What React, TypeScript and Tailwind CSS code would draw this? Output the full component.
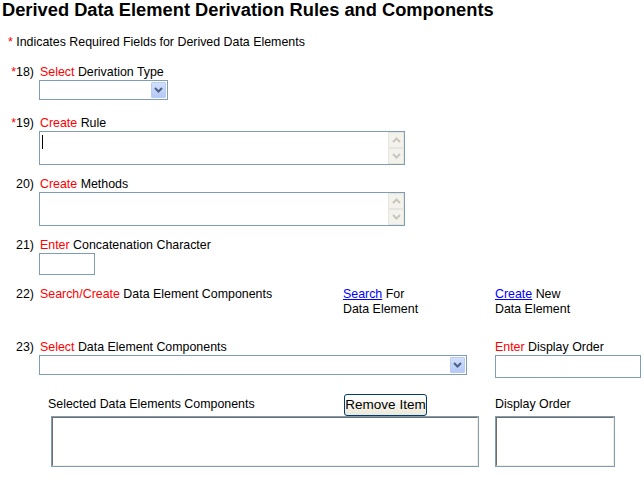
const RED = "text-[#ff0000]";

function Chevron({ up, color }: { up?: boolean; color: string }) {
  return (
    <svg width="9" height="6" viewBox="0 0 9 6" className={up ? "rotate-180" : ""}>
      <path d="M1 1 L4.5 4.5 L8 1" fill="none" stroke={color} strokeWidth="2" />
    </svg>
  );
}

function SelectBox({ width }: { width: string }) {
  return (
    <div className={`relative h-[20px] ${width} border border-[#7f9db9] bg-white`}>
      <div className="absolute right-px top-px flex h-[16px] w-[15px] items-center justify-center rounded-[1px] border border-[#b9cbf3] bg-gradient-to-b from-[#d2dffc] to-[#b5c9f7]">
        <Chevron color="#4d6185" />
      </div>
    </div>
  );
}

function TextArea({ cursor }: { cursor?: boolean }) {
  return (
    <div className="relative h-[34px] w-[366px] border border-[#7f9db9] bg-white">
      {cursor && <div className="absolute left-[2px] top-[3px] h-[14px] w-px bg-black" />}
      <div className="absolute right-0 top-0 flex flex-col">
        <div className="flex h-[16px] w-[16px] items-center justify-center border border-[#e8e6dc] bg-[#f3f2ec]">
          <Chevron up color="#c9c7bb" />
        </div>
        <div className="flex h-[16px] w-[16px] items-center justify-center border border-[#e8e6dc] bg-[#f3f2ec]">
          <Chevron color="#c9c7bb" />
        </div>
      </div>
    </div>
  );
}

function Label({ num, req, verb, rest }: { num: string; req?: boolean; verb: string; rest: string }) {
  return (
    <div className="flex pt-px leading-[15px]">
      <div className="w-[34px] text-right">
        {req && <span className={RED}>*</span>}
        {num}
      </div>
      <div className="ml-[6px]">
        <span className={RED}>{verb}</span> {rest}
      </div>
    </div>
  );
}

function ListBox({ width }: { width: string }) {
  return (
    <div className={`h-[51px] ${width} border border-[#7f9db9] bg-white`}>
      <div className="h-full w-full border border-t-[#716f64] border-l-[#716f64] border-r-[#f1efe2] border-b-[#f1efe2]" />
    </div>
  );
}

export default function App() {
  return (
    <div className="h-[484px] w-[644px] overflow-hidden bg-white font-['Liberation_Sans',Arial,sans-serif] text-[12.4px] text-black">
      <h1 className="pl-[2px] text-[18.3px] font-bold leading-[19px]">
        Derived Data Element Derivation Rules and Components
      </h1>

      <div className="mt-[16px] pl-[8px] leading-[15px]">
        <span className={RED}>*</span> Indicates Required Fields for Derived Data Elements
      </div>

      <div className="mt-[14px]">
        <Label num="18)" req verb="Select" rest="Derivation Type" />
        <div className="ml-[39px]">
          <SelectBox width="w-[129px]" />
        </div>
      </div>

      <div className="mt-[15px]">
        <Label num="19)" req verb="Create" rest="Rule" />
        <div className="ml-[39px]">
          <TextArea cursor />
        </div>
      </div>

      <div className="mt-[11px]">
        <Label num="20)" verb="Create" rest="Methods" />
        <div className="ml-[39px]">
          <TextArea />
        </div>
      </div>

      <div className="mt-[11px]">
        <Label num="21)" verb="Enter" rest="Concatenation Character" />
        <div className="ml-[39px] h-[22px] w-[56px] border border-[#7f9db9] bg-white" />
      </div>

      <div className="mt-[11px] flex leading-[15px]">
        <div className="w-[343px]">
          <Label num="22)" verb="Search/Create" rest="Data Element Components" />
        </div>
        <div className="w-[152px] pt-px">
          <a href="#" className="text-[#0000ff] underline">Search</a> For
          <br />
          Data Element
        </div>
        <div className="pt-px">
          <a href="#" className="text-[#0000ff] underline">Create</a> New
          <br />
          Data Element
        </div>
      </div>

      <div className="mt-[22px] flex">
        <div className="w-[495px]">
          <Label num="23)" verb="Select" rest="Data Element Components" />
          <div className="ml-[39px]">
            <SelectBox width="w-[428px]" />
          </div>
        </div>
        <div>
          <div className="pt-px leading-[15px]">
            <span className={RED}>Enter</span> Display Order
          </div>
          <div className="h-[23px] w-[146px] border border-[#7f9db9] bg-white" />
        </div>
      </div>

      <div className="mt-[15px] flex">
        <div className="w-[495px]">
          <div className="flex h-[23px] items-center pl-[48px]">
            <div className="w-[296px]">Selected Data Elements Components</div>
            <button className="h-[22px] w-[83px] whitespace-nowrap rounded-[3px] border border-[#003c74] bg-gradient-to-b from-white to-[#ece9d8] px-0 text-[13.5px] leading-[18px]">
              Remove Item
            </button>
          </div>
          <div className="ml-[51px]">
            <ListBox width="w-[428px]" />
          </div>
        </div>
        <div>
          <div className="flex h-[23px] items-center">Display Order</div>
          <ListBox width="w-[120px]" />
        </div>
      </div>
    </div>
  );
}
